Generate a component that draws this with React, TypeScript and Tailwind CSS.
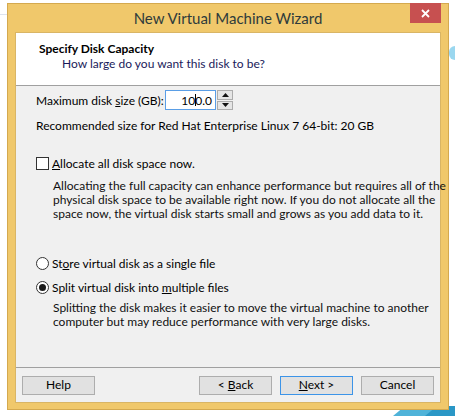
import React from 'react';

const FONT = { fontFamily: 'Lato, "Noto Sans", sans-serif' };

function WinButton({ children, focused }: { children: React.ReactNode; focused?: boolean }) {
  return (
    <button
      type="button"
      className={
        'w-[73px] h-[19px] flex items-center justify-center text-[12px] text-black bg-[#e1e1e1] border ' +
        (focused ? 'border-[#3c94e8]' : 'border-[#adadad]')
      }
    >
      <span>{children}</span>
    </button>
  );
}

function Radio({ checked }: { checked?: boolean }) {
  return (
    <span className="w-[13px] h-[13px] rounded-full border border-[#333] bg-white flex items-center justify-center shrink-0">
      {checked && <span className="w-[7px] h-[7px] rounded-full bg-[#1a1a1a]" />}
    </span>
  );
}

export default function App() {
  return (
    <div className="relative w-[455px] h-[416px] bg-white overflow-hidden whitespace-nowrap" style={FONT}>
      <div className="absolute left-0 top-[14px] w-[7px] h-px bg-[#dde3ee]" />
      <div className="absolute right-0 top-[46px] w-[6px] h-[14px] rounded-l-full bg-[#9ad7ef]" />
      <svg className="absolute right-0 bottom-0" width="70" height="10" viewBox="0 0 70 10">
        <polygon points="8,10 20,0 70,0 70,10" fill="#4fb3d9" />
        <polygon points="40,10 52,0 70,0 70,10" fill="#2a97c6" />
      </svg>

      <div className="relative ml-[7px] mt-[3px] w-[442px] h-[407px] bg-[#f0c86b] border border-[#d4a94f] flex flex-col">
        {/* title bar */}
        <div className="h-[28px] flex items-start shrink-0">
          <div className="w-[38px]" />
          <div className="flex-1 text-center text-[15px] text-[#2e3b3b] pt-[3px] leading-[22px]">
            New Virtual Machine Wizard
          </div>
          <div className="w-[38px] flex justify-start">
            <div className="w-[31px] h-[20px] bg-[#c75050] flex items-center justify-center -mt-px">
              <svg width="9" height="9" viewBox="0 0 9 9">
                <path d="M1 1 L8 8 M8 1 L1 8" stroke="white" strokeWidth="1.8" />
              </svg>
            </div>
          </div>
        </div>

        {/* client area */}
        <div className="mx-[7px] mb-[6px] flex-1 flex flex-col bg-[#f0f0f0] border border-[#d9b565]">
          <div className="h-[53px] bg-white border-b border-[#a0a0a0] pl-[23px] pt-[8px] shrink-0">
            <div className="text-[12px] font-bold text-black leading-[15px]">Specify Disk Capacity</div>
            <div className="text-[12px] text-[#1a1a5a] leading-[15px] pl-[23px]">
              How large do you want this disk to be?
            </div>
          </div>

          <div className="flex-1 pl-[20px] text-[12px] text-black leading-[15px]">
            <div className="flex items-center h-[20px] mt-[4px]">
              <span className="w-[129px]">
                Maximum disk <span className="underline">s</span>ize (GB):
              </span>
              <div className="w-[51px] h-[20px] bg-white border border-[#5a9ee6] flex items-center justify-end pr-[3px]">
                10<span className="inline-block w-px h-[12px] bg-black mx-[-0.5px]" />0.0
              </div>
              <div className="ml-px flex flex-col gap-px w-[16px] h-[20px]">
                <div className="flex-1 bg-[#e5e5e5] border border-[#acacac] flex items-center justify-center">
                  <svg width="7" height="4" viewBox="0 0 7 4"><polygon points="0,4 3.5,0 7,4" fill="#111" /></svg>
                </div>
                <div className="flex-1 bg-[#e5e5e5] border border-[#acacac] flex items-center justify-center">
                  <svg width="7" height="4" viewBox="0 0 7 4"><polygon points="0,0 3.5,4 7,0" fill="#111" /></svg>
                </div>
              </div>
            </div>
            <div className="mt-[8px]">Recommended size for Red Hat Enterprise Linux 7 64-bit: 20 GB</div>

            <div className="flex items-center gap-[3px] mt-[23px] h-[15px]">
              <span className="w-[13px] h-[13px] border border-[#333] bg-white shrink-0" />
              <span>
                <span className="underline">A</span>llocate all disk space now.
              </span>
            </div>
            <div className="pl-[17px] mt-[8px] text-[#111] leading-[14px]">
              Allocating the full capacity can enhance performance but requires all of the
              <br />
              physical disk space to be available right now. If you do not allocate all the
              <br />
              space now, the virtual disk starts small and grows as you add data to it.
            </div>

            <div className="flex items-center gap-[3px] mt-[35px] h-[15px]">
              <Radio />
              <span>
                St<span className="underline">o</span>re virtual disk as a single file
              </span>
            </div>
            <div className="flex items-center gap-[3px] mt-[9px] h-[15px]">
              <Radio checked />
              <span>
                Split virtual disk into <span className="underline">m</span>ultiple files
              </span>
            </div>
            <div className="pl-[17px] mt-[6px] text-[#111] leading-[14px]">
              Splitting the disk makes it easier to move the virtual machine to another
              <br />
              computer but may reduce performance with very large disks.
            </div>
          </div>

          <div className="h-[35px] border-t border-[#a0a0a0] flex items-center px-[6px] shrink-0">
            <WinButton>Help</WinButton>
            <div className="flex-1" />
            <div className="flex gap-[8px]">
              <WinButton>
                &lt; <span className="underline">B</span>ack
              </WinButton>
              <WinButton focused>
                <span className="underline">N</span>ext &gt;
              </WinButton>
              <WinButton>Cancel</WinButton>
            </div>
          </div>
        </div>
      </div>
    </div>
  );
}
